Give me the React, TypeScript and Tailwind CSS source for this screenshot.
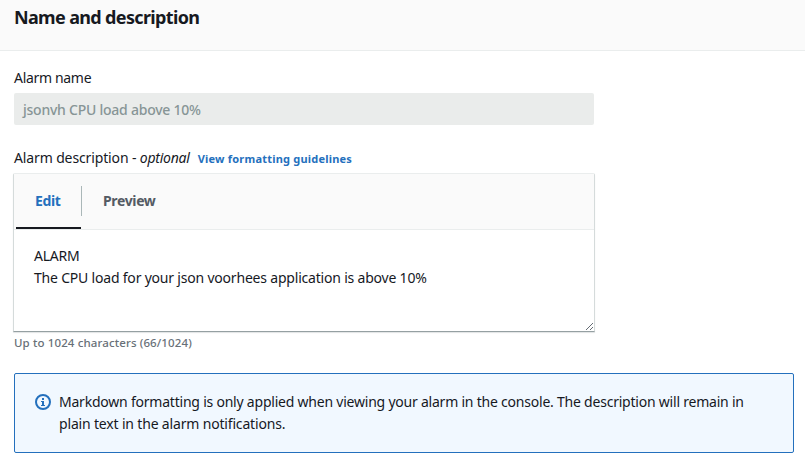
function InfoIcon() {
  return (
    <svg className="mt-[3px] block h-4 w-4 shrink-0" viewBox="0 0 16 16" fill="none">
      <circle cx="8" cy="8" r="7" stroke="#2470bd" strokeWidth="2" />
      <path d="M7 4h2v2H7zM6 7h3v4h1v1H6v-1h1V8H6z" fill="#2470bd" />
    </svg>
  );
}

export default function App() {
  return (
    <div className="h-[462px] w-[805px] overflow-hidden bg-white font-['Noto_Sans','Open_Sans',sans-serif] text-[14px] leading-[22px] tracking-[-0.22px] text-[#16191f]">
      <header className="h-[51px] border-b border-[#eaeded] bg-[#fafafa] px-[14px] pt-[6px]">
        <h2 className="w-max text-[18px] leading-[22px] font-bold tracking-[-0.65px]">Name and description</h2>
      </header>

      <main className="px-[14px] pt-[16px]">
        <div className="w-max tracking-[-0.32px]">Alarm name</div>
        <div className="mt-[4px] flex h-[32px] w-[580px] items-center rounded-[2px] bg-[#eaeceb] px-[9px] text-[#879596]">
          <span className="pt-[2px] font-medium tracking-[-0.24px]">jsonvh CPU load above 10%</span>
        </div>

        <div className="mt-[22px] flex h-[22px] items-baseline">
          <span className="tracking-[-0.13px]">Alarm description -&nbsp;</span>
          <em className="tracking-[-0.25px]">optional</em>
          <a className="ml-[8px] text-[11px] font-bold tracking-[0.21px] text-[#2470bd]">View formatting guidelines</a>
        </div>

        <section className="mt-[4px] ml-[-1px] h-[159px] w-[582px] rounded-t-[2px] border border-t-[#eaeded] border-r-[#d5dbdb] border-b-[#95a0a2] border-l-[#d5dbdb] shadow-[0_1px_1px_rgba(0,28,36,0.12)]">
          <div className="flex h-[56px] border-b border-[#eaeded] bg-[#fafafa] pl-[2px] font-bold tracking-[-0.36px]">
            <div className="flex h-[55px] w-[65px] border-b-2 border-[#16191f] pl-[19px] pt-[16px] text-[#2470bd]">
              <span>Edit</span>
            </div>
            <div className="mt-[12px] h-[30px] w-px bg-[#aab7b8]" />
            <span className="ml-[21px] pt-[16px] text-[#545b64]">Preview</span>
          </div>
          <div className="flex h-[101px] justify-between pl-[20px]">
            <div className="pt-[15px]">
              <p>ALARM</p>
              <p className="tracking-[-0.2px]">The CPU load for your json voorhees application is above 10%</p>
            </div>
            <svg className="h-[9px] w-[9px] self-end" viewBox="0 0 9 9" stroke="#545b64" strokeWidth=".9">
              <path d="M1 8 8 1M5 8l3-3" />
            </svg>
          </div>
        </section>
        <div className="w-max text-[11.5px] font-medium tracking-[0.12px] text-[#687078]">Up to 1024 characters (66/1024)</div>

        <aside className="mt-[19px] flex h-[80px] w-[780px] rounded-[2px] border border-[#2470bd] bg-[#f1f8ff] pt-[17px] pl-[20px]">
          <InfoIcon />
          <p className="ml-[8px]">
            <span className="whitespace-nowrap">Markdown formatting is only applied when viewing your alarm in the console. The description will remain in</span>
            <br />
            <span className="tracking-[-0.17px]">plain text in the alarm notifications.</span>
          </p>
        </aside>
      </main>
    </div>
  );
}
